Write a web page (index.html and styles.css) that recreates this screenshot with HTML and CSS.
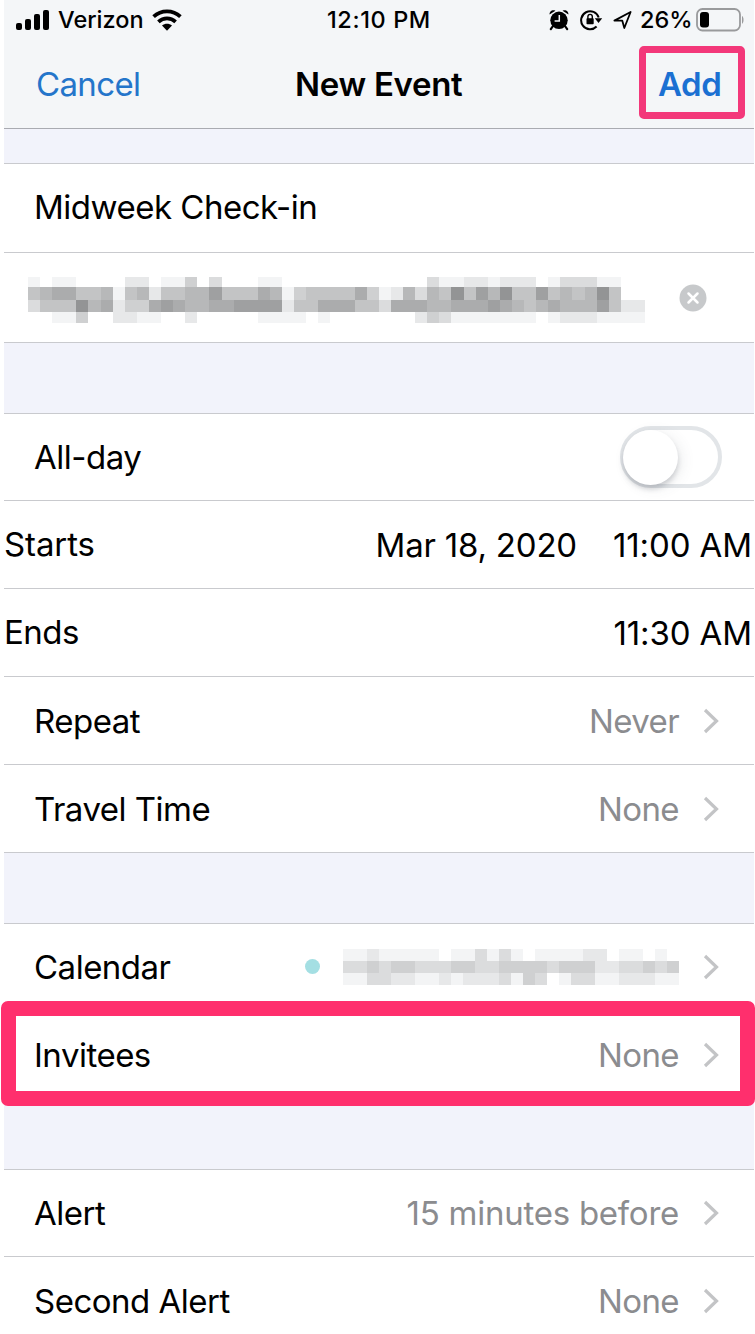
FILE: index.html
```html
<!DOCTYPE html>
<html lang="en">
<head>
<meta charset="utf-8">
<title>New Event</title>
<link rel="stylesheet" href="styles.css">
</head>
<body>
<main class="phone">
  <header class="top">
    <div class="status">
      <div class="status-left">
        <svg class="signal" width="34" height="22" viewBox="0 0 34 22"><rect x="0" y="14" width="6" height="7" rx="2"/><rect x="9" y="10" width="6" height="11" rx="2"/><rect x="18" y="5" width="6" height="16" rx="2"/><rect x="27" y="1" width="6" height="20" rx="2"/></svg>
        <span class="carrier">Verizon</span>
        <svg class="wifi" width="30" height="22" viewBox="0 0 30 22"><g fill="none" stroke="#000" stroke-width="3.8"><path d="M1.6 7.6C9.2.5 20.8.5 28.4 7.6"/><path d="M6.4 12.8c5-4.5 12.2-4.5 17.2 0"/></g><path d="M10 16.6c2.9-2.5 7.1-2.5 10 0L15 21.7z"/></svg>
      </div>
      <span class="clock">12:10 PM</span>
      <div class="status-right">
        <svg width="20" height="22" viewBox="0 0 20 22"><path d="M.6 5.600C.2 2.500 3.200.2 6.400 1.700zM19.400 5.600c.4-3.100-2.600-5.400-5.800-3.900z"/><circle cx="10" cy="11.300" r="8.700"/><path d="M4 17l-2.200 3.200M16 17l2.200 3.200" stroke="#000" stroke-width="2.200" stroke-linecap="round"/><path d="M10.300 6v6H5.600" fill="none" stroke="#f5f6f9" stroke-width="1.500"/></svg>
        <svg class="lock" width="23" height="22" viewBox="0 0 23 22"><path d="M16.600 17.500A9 9 0 1 1 18.700 8.500" fill="none" stroke="#000" stroke-width="2"/><path d="M14.800 9.300h7.400L18.500 14z"/><rect x="6.500" y="9.300" width="7.200" height="6" rx=".8"/><path d="M7.900 10V7.600a2.200 2.200 0 0 1 4.400 0V10" fill="none" stroke="#000" stroke-width="1.400"/></svg>
        <svg class="arrow" width="19" height="20" viewBox="0 0 19 20"><path d="M1.400 10.600L17.600 2 11.300 18l-2-7.300z" fill="none" stroke="#000" stroke-width="1.800" stroke-linejoin="round"/></svg>
        <span class="percent">26%</span>
        <svg class="battery" width="49" height="24" viewBox="0 0 49 24"><rect x="1" y="1" width="43" height="21.500" rx="5.500" fill="none" stroke="#999a9c" stroke-width="1.800"/><rect x="4" y="4" width="9" height="15.500" rx="3"/><path d="M46 8c2 .8 2 7 0 7.800z" fill="#999a9c"/></svg>
      </div>
    </div>
    <nav class="nav">
      <span class="cancel">Cancel</span>
      <h1 class="title">New Event</h1>
      <span class="add">Add</span>
    </nav>
  </header>
  <div class="gap gap-small"></div>
  <section class="group">
    <div class="row row-title"><span>Midweek Check-in</span></div>
    <div class="row row-url">
      <svg class="mosaic mosaic-url" width="617" height="46" viewBox="0 0 51 46" preserveAspectRatio="none" shape-rendering="crispEdges" data-tops="0,10,23,35,46"></svg>
      <svg class="clear" width="28" height="28" viewBox="0 0 28 28"><circle cx="14" cy="14" r="13.500" fill="#c7c9cb"/><path d="M9.500 9.500l9 9m0-9l-9 9" stroke="#fff" stroke-width="2.500" stroke-linecap="round"/></svg>
    </div>
  </section>
  <div class="gap"></div>
  <section class="group">
    <div class="row row-first"><span>All-day</span><span class="switch"><span class="knob"></span></span></div>
    <div class="row row-edge"><span class="starts">Starts</span><span class="date">Mar 18, 2020</span><span class="time">11:00 AM</span></div>
    <div class="row row-edge"><span class="ends">Ends</span><span class="time time-end">11:30 AM</span></div>
    <div class="row"><span>Repeat</span><span class="value">Never</span><svg class="chevron" viewBox="0 0 16 26"><path d="M2 2l11.500 11L2 24"/></svg></div>
    <div class="row"><span>Travel Time</span><span class="value">None</span><svg class="chevron" viewBox="0 0 16 26"><path d="M2 2l11.500 11L2 24"/></svg></div>
  </section>
  <div class="gap"></div>
  <section class="group">
    <div class="row row-calendar"><span>Calendar</span><span class="dot"></span><svg class="mosaic mosaic-mail" width="336" height="36" viewBox="0 0 28 36" preserveAspectRatio="none" shape-rendering="crispEdges" data-tops="0,12,24,36"></svg><svg class="chevron" viewBox="0 0 16 26"><path d="M2 2l11.500 11L2 24"/></svg></div>
    <div class="row row-invitees"><span>Invitees</span><span class="value">None</span><svg class="chevron" viewBox="0 0 16 26"><path d="M2 2l11.500 11L2 24"/></svg></div>
  </section>
  <div class="gap gap-last"></div>
  <section class="group">
    <div class="row row-first"><span>Alert</span><span class="value before">15 minutes before</span><svg class="chevron" viewBox="0 0 16 26"><path d="M2 2l11.500 11L2 24"/></svg></div>
    <div class="row"><span>Second Alert</span><span class="value">None</span><svg class="chevron" viewBox="0 0 16 26"><path d="M2 2l11.500 11L2 24"/></svg></div>
  </section>
</main>
<script src="mosaic.js"></script>
</body>
</html>
```
FILE: styles.css
```css
*, *::after { box-sizing: border-box; }
body {
  margin: 0;
  height: 1334px;
  overflow: hidden;
  background: #fff;
  color: #000;
  font-family: Inter, "Liberation Sans", sans-serif;
  font-size: 33px;
  line-height: 40px;
  white-space: nowrap;
}
svg { display: block; flex: none; }
.phone { width: 750px; height: 1334px; margin-left: 4px; }
.top { height: 129px; background: #f4f6f8; border-bottom: 1px solid #a9abb1; }
.status {
  display: grid;
  grid-template-columns: 323px 104px 1fr;
  align-items: center;
  height: 40px;
  font-size: 23.500px;
  font-weight: 500;
}
.status-left, .status-right { display: flex; align-items: center; }
.status-left { padding-left: 12px; }
.carrier { margin-left: 8px; width: 86px; }
.wifi { margin-left: 8px; }
.clock { letter-spacing: .6px; }
.status-right { padding-left: 118px; }
.lock { margin-left: 11px; }
.arrow { margin-left: 10px; }
.percent { margin-left: 8px; width: 52px; }
.battery { margin-left: 4px; }
.nav { display: grid; grid-template-columns: 291px 344px 1fr; height: 88px; align-items: center; }
.cancel { padding-left: 32px; color: #2475ca; letter-spacing: -.65px; }
.title { margin: 0; font-size: 33px; font-weight: 600; line-height: 40px; letter-spacing: -.3px; }
.add {
  width: 106px;
  height: 73px;
  margin-top: -3px;
  padding-left: 12px;
  border: 7px solid #f3387a;
  border-radius: 5px;
  color: #1b70d2;
  font-weight: 600;
  line-height: 62px;
  letter-spacing: -.4px;
}
.gap { height: 71px; background: #f2f3fb; border-bottom: 1px solid #c9cace; }
.gap-small { height: 35px; }
.gap-last { height: 70px; }
.row {
  position: relative;
  display: flex;
  align-items: center;
  height: 88px;
  padding: 0 35px 0 30px;
  border-bottom: 1px solid #c9cace;
  background: #fff;
  letter-spacing: -.5px;
}
.row-title { height: 89px; padding-bottom: 2px; }
.row-url { height: 90px; padding: 0 47px 0 24px; }
.row-first { height: 87px; }
.row-edge { padding: 0 2px 0 0; letter-spacing: -.1px; }
.row-calendar, .row-invitees { padding-bottom: 2px; }
.starts, .ends { margin-top: -2px; }
.ends { letter-spacing: -.5px; }
.mosaic { filter: blur(.5px); }
.mosaic-url { margin-top: 4px; }
.clear { margin-left: auto; }
.switch {
  width: 102px;
  height: 62px;
  margin-left: auto;
  margin-right: -3px;
  border: 4px solid #e2e5e8;
  border-radius: 31px;
}
.knob {
  display: block;
  width: 55px;
  height: 55px;
  margin-left: -1px;
  border-radius: 50%;
  background: #fff;
  box-shadow: 0 4px 5px rgba(80, 85, 95, .24), 4px 3px 14px rgba(80, 85, 95, .1);
}
.date { margin-left: auto; letter-spacing: -.2px; }
.time { margin-left: 36px; }
.time-end { margin-left: auto; }
.value { margin-left: auto; color: #8b8c8f; letter-spacing: -.6px; }
.before { letter-spacing: -.25px; }
.chevron {
  width: 16px;
  height: 26px;
  margin-left: 24px;
  fill: none;
  stroke: #c3c4c6;
  stroke-width: 3.200;
}
.dot { width: 15px; height: 15px; margin-left: auto; border-radius: 50%; background: #a4dfe3; }
.mosaic-mail { margin-left: 23px; }
.row-invitees::after {
  content: "";
  position: absolute;
  left: -3px;
  top: -11px;
  width: 754px;
  height: 105px;
  border: 15px solid #ff2f6d;
  border-radius: 7px;
}
```
FILE: mosaic.js
```js
// Each digit is one tile's darkness, from 0 (white) to 9.
const tiles = {
  '.mosaic-url': [
    '101100002201140300011000000000000311221222013331100',
    '567755615625566855576145555741263659586955856569500',
    '355596724478766778888255777553777667778765676668522',
    '001140022110020000011110100000002431111111012221111'
  ],
  '.mosaic-mail': [
    '1121111101131310111122011010',
    '3343443334433444434442233434',
    '1133221121222314301331122211'
  ]
};

for (const [selector, rows] of Object.entries(tiles)) {
  const svg = document.querySelector(selector);
  const tops = svg.dataset.tops.split(',').map(Number);
  rows.forEach((row, r) => [...row].forEach((digit, column) => {
    if (digit === '0') return;
    const rect = document.createElementNS('http://www.w3.org/2000/svg', 'rect');
    const level = 255 - digit * 12;
    rect.setAttribute('x', column);
    rect.setAttribute('y', tops[r]);
    rect.setAttribute('width', 1);
    rect.setAttribute('height', tops[r + 1] - tops[r]);
    rect.setAttribute('fill', `rgb(${level}, ${level + 1}, ${level + 2})`);
    svg.append(rect);
  }));
}
```
